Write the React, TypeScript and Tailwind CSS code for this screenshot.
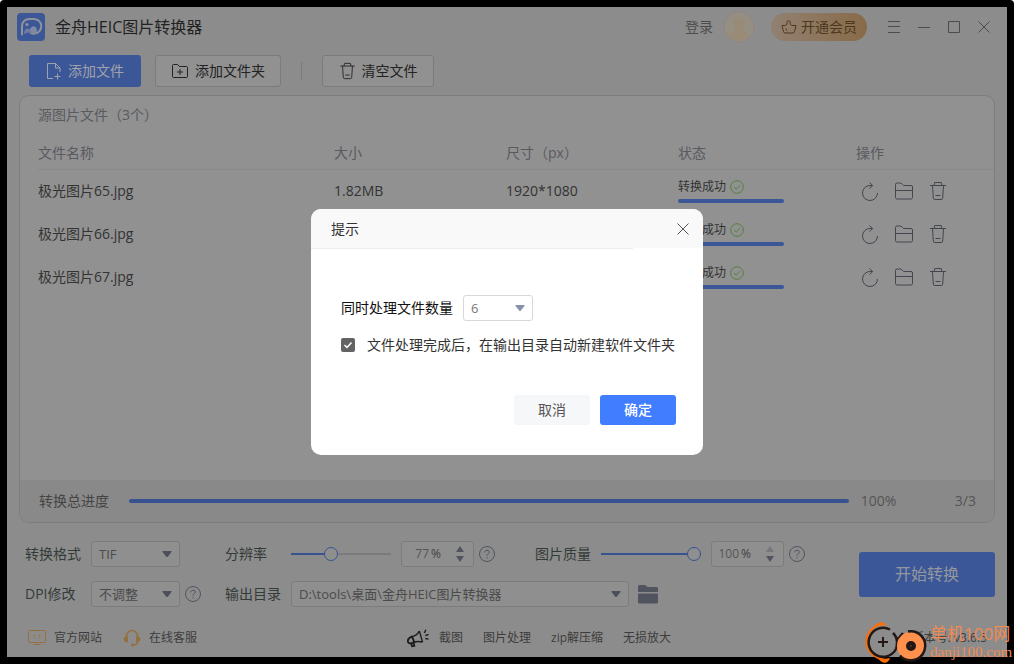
import { useState } from "react";
import type { CSSProperties, ReactNode } from "react";

const files = [
  { name: "极光图片65.jpg", size: "1.82MB", px: "1920*1080" },
  { name: "极光图片66.jpg", size: "", px: "" },
  { name: "极光图片67.jpg", size: "", px: "" },
];

const tools = ["截图", "图片处理", "zip解压缩", "无损放大"];

const Logo = () => (
  <svg viewBox="0 0 28 28" className="size-7">
    <rect width="28" height="28" rx="4" fill="#3c5798" />
    <path
      d="M5 21.500V13a7 7 0 0 1 7-7h4.500a7.300 7.300 0 0 1 1 14.600q-2 .2-3.500-.6"
      fill="none"
      stroke="#8f9299"
      strokeWidth="2"
      strokeLinecap="round"
    />
    <circle cx="10" cy="11.500" r="1.600" fill="#8f9299" />
    <path d="M7 21c0-3.500 1.500-5.500 3.500-5.500 2 0 2.500 2 4.500 4.500-3-.5-5.500-.5-8 1z" fill="#6f7ca0" />
    <path d="M12.500 17c1.500-3.500 4.500-5 6.500-2.500 1 1.500 1 3.500.5 5.500-3 1-5 0-7-3z" fill="#7f89a3" />
  </svg>
);

const FileAddIcon = () => (
  <svg viewBox="0 0 16 18" className="h-[18px] w-4" fill="none" stroke="currentColor">
    <path d="M7 16.500H1.500V1.500h8l4.500 4.500v4M9.500 1.500v4.500H14M11.500 11.500v6M8.500 14.500h6" />
  </svg>
);

const FolderAddIcon = () => (
  <svg viewBox="0 0 18 16" className="h-4 w-[18px]" fill="none" stroke="currentColor">
    <path d="M1.500 2.500q0-1 1-1h4l2 2h7q1 0 1 1v9q0 1-1 1h-13q-1 0-1-1zM9 6v6M6 9h6" />
  </svg>
);

const TrashIcon = ({ className }: { className: string }) => (
  <svg viewBox="0 0 18 20" className={className} fill="none" stroke="currentColor">
    <path d="M1 4.500h16M5 4.500l.8-3h6.400l.8 3M3.500 4.500l.8 12.500q.2 1.500 1.500 1.500h6.400q1.300 0 1.500-1.500l.8-12.500M6.500 14.500h5" />
  </svg>
);

const RetryIcon = () => (
  <svg viewBox="0 0 18 20" className="h-5 w-[18px]" fill="none" stroke="currentColor">
    <path d="M11.500 4.500H9a7.500 7.500 0 1 0 7.500 7.500M8.500 1.500l3.200 3-3.200 3.200" />
  </svg>
);

const FolderIcon = () => (
  <svg viewBox="0 0 20 20" className="size-5" fill="none" stroke="currentColor">
    <path d="M1.500 3.500q0-1.500 1.500-1.500h4l2.500 2.500h7.500q1.500 0 1.500 1.500v10.500q0 1.500-1.500 1.500h-14q-1.500 0-1.500-1.500zM1.500 9.500h17" />
  </svg>
);

const CheckCircle = () => (
  <svg viewBox="0 0 14 14" className="size-3.5" fill="none" stroke="#54813f">
    <circle cx="7" cy="7" r="6.300" />
    <path d="M4 7l2.200 2L10 5.300" />
  </svg>
);

const CloseIcon = () => (
  <svg viewBox="0 0 12 12" className="size-3" fill="none" stroke="currentColor">
    <path d="M.5.5l11 11M11.500.5l-11 11" />
  </svg>
);

const HelpButton = ({ label }: { label: string }) => (
  <button aria-label={label} className="ml-[5px] text-[#50555f]">
    <svg viewBox="0 0 16 16" className="size-4" fill="none" stroke="currentColor">
      <circle cx="8" cy="8" r="7.500" />
      <path d="M5.800 6.400c0-3 4.600-2.800 4.500-.2C10.200 7.800 8 7.800 8 9.800M8 11v1.300" />
    </svg>
  </button>
);

type SelectProps = { id: string; value: string; className: string; light?: boolean };

const Select = ({ id, value, className, light }: SelectProps) => (
  <div className={`relative ml-2.5 ${className}`}>
    <select
      id={id}
      defaultValue={value}
      className={`block h-[26px] w-full appearance-none rounded-[3px] border pr-6 pl-[7px] text-[13px] leading-6 ${
        light ? "border-[#d8d8d8] bg-white text-[#777]" : "border-[#7c7c7c] bg-[#8f8f8f] text-[#4b4b4b]"
      }`}
    >
      <option>{value}</option>
    </select>
    <svg
      viewBox="0 0 10 6"
      className={`pointer-events-none absolute top-2.5 right-2 h-1.5 w-2.5 ${light ? "text-[#8592aa]" : "text-[#4a4f59]"}`}
      fill="currentColor"
    >
      <path d="M1 0h8q1 0 .5 1L5.500 6h-1L.5 1Q0 0 1 0z" />
    </svg>
  </div>
);

type AmountProps = { id: string; label: string; value: number; max: number };

const Amount = ({ id, label, value, max }: AmountProps) => {
  const [amount, setAmount] = useState(value);
  const fill = { "--fill": `${(amount / max) * 100}%` } as CSSProperties;
  return (
    <>
      <input
        id={id}
        type="range"
        min={0}
        max={max}
        value={amount}
        onChange={(e) => setAmount(Number(e.target.value))}
        style={fill}
        className="h-3.5 w-[100px] appearance-none bg-transparent [&::-webkit-slider-runnable-track]:h-0.5 [&::-webkit-slider-runnable-track]:bg-[linear-gradient(to_right,#38528f_var(--fill),#7b7b7b_var(--fill))] [&::-webkit-slider-thumb]:-mt-1.5 [&::-webkit-slider-thumb]:size-3.5 [&::-webkit-slider-thumb]:appearance-none [&::-webkit-slider-thumb]:rounded-full [&::-webkit-slider-thumb]:border [&::-webkit-slider-thumb]:border-[#38528f] [&::-webkit-slider-thumb]:bg-[#8f8f8f]"
      />
      <div className="ml-2.5 flex h-[26px] w-[73px] items-center rounded-[3px] border border-[#7c7c7c] bg-[#8f8f8f] text-[#3f3f3f]">
        <input
          aria-label={label}
          value={amount}
          onChange={(e) => setAmount(Number(e.target.value) || 0)}
          className="w-[27px] bg-transparent text-right text-xs text-[#555]"
        />
        <span className="ml-0.5 text-xs">%</span>
        <span className="mr-[9px] ml-auto flex flex-col gap-1">
          <button
            aria-label={`${label}增加`}
            className={amount < max ? "text-[#50545e]" : "text-[#74777c]"}
            onClick={() => setAmount(Math.min(max, amount + 1))}
          >
            <svg viewBox="0 0 8 6" className="h-1.5 w-2" fill="currentColor">
              <path d="M4 0l4 6H0z" />
            </svg>
          </button>
          <button aria-label={`${label}减少`} className="text-[#50545e]" onClick={() => setAmount(Math.max(0, amount - 1))}>
            <svg viewBox="0 0 8 6" className="h-1.5 w-2" fill="currentColor">
              <path d="M4 6L0 0h8z" />
            </svg>
          </button>
        </span>
      </div>
      <HelpButton label={`${label}说明`} />
    </>
  );
};

const TitleBar = () => (
  <header className="flex h-10 items-center pr-[17px] pl-2.5">
    <Logo />
    <h1 className="ml-2.5 text-base text-[#222]">金舟HEIC图片转换器</h1>
    <div className="ml-auto flex items-center text-[#4c4c4c]">
      <a href="#login" className="text-sm">
        登录
      </a>
      <svg viewBox="0 0 32 32" className="ml-2.5 size-8">
        <circle cx="16" cy="16" r="15" fill="#948e83" stroke="#93857f" />
        <path
          d="M16 6c3.500 0 5.500 2.500 5.500 6 0 3-1.300 5-2.500 6.500.5 3 6 2 7 6.500A14 14 0 0 1 6 25c1-4.500 6.500-3.500 7-6.500-1.200-1.500-2.500-3.500-2.500-6.500 0-3.500 2-6 5.500-6z"
          fill="#988c76"
        />
      </svg>
      <button className="ml-4 flex h-7 w-24 items-center justify-center gap-1 rounded-full bg-linear-to-r from-[#918071] to-[#886b48] text-sm text-[#4c381c]">
        <svg viewBox="0 0 16 14" className="h-3.5 w-4" fill="none" stroke="currentColor">
          <path d="M1 5.500h3.500L6 4V2.500Q6 .8 7.500.8T9.200 2.500V4l1.500 1.500H15l-1.500 6q-.3 1.500-1.500 1.500H4q-1.200 0-1.500-1.500zM5 8.500q0 1.800 1.200 2.200" />
        </svg>
        开通会员
      </button>
      <div className="ml-[21px] flex items-center gap-[18px]">
        <button aria-label="菜单">
          <svg viewBox="0 0 12 12" className="size-3" stroke="currentColor">
            <path d="M0 .5h12M0 5.500h12M0 11.500h12" />
          </svg>
        </button>
        <button aria-label="最小化">
          <svg viewBox="0 0 12 12" className="size-3" stroke="currentColor">
            <path d="M0 6.500h12" />
          </svg>
        </button>
        <button aria-label="最大化">
          <svg viewBox="0 0 12 12" className="size-3" fill="none" stroke="currentColor">
            <path d="M.5.5h11v11H.5z" />
          </svg>
        </button>
        <button aria-label="关闭">
          <CloseIcon />
        </button>
      </div>
    </div>
  </header>
);

const ToolButton = ({ children, className }: { children: ReactNode; className: string }) => (
  <button className={`flex h-8 items-center justify-center gap-1.5 rounded-[3px] text-sm ${className}`}>{children}</button>
);

const Toolbar = () => (
  <div className="mt-2 flex items-center pl-[22px]">
    <ToolButton className="w-28 bg-[#3c5798] text-[#a0a3aa]">
      <FileAddIcon />
      添加文件
    </ToolButton>
    <ToolButton className="ml-3.5 w-[126px] border border-[#7b7b7b] bg-[#919191] text-[#222]">
      <FolderAddIcon />
      添加文件夹
    </ToolButton>
    <span className="ml-5 h-[18px] w-px bg-[#7b7b7b]" />
    <ToolButton className="ml-5 w-28 border border-[#7b7b7b] bg-[#919191] text-[#222]">
      <TrashIcon className="h-[18px] w-[17px]" />
      清空文件
    </ToolButton>
  </div>
);

const FilePanel = () => (
  <main className="mx-3 mt-2 flex grow flex-col overflow-hidden rounded-[10px] border border-[#7d7d7d] bg-[#919191]">
    <h2 className="mt-[9px] ml-[18px] text-sm text-[#585a60]">源图片文件（3个）</h2>
    <div className="mt-[7px] ml-[18px]">
      <table className="w-full table-fixed text-sm">
        <thead>
          <tr className="h-[37px] border-b border-[#898989] text-left text-[#585a60] [&>th]:pt-1.5 [&>th]:font-normal">
            <th>文件名称</th>
            <th className="w-[172px]">大小</th>
            <th className="w-[172px]">尺寸（px）</th>
            <th className="w-[178px]">状态</th>
            <th className="w-[138px]">操作</th>
          </tr>
        </thead>
        <tbody>
          {files.map((file) => (
            <tr key={file.name} className="h-[43px] text-[#333]">
              <td>{file.name}</td>
              <td>{file.size}</td>
              <td>{file.px}</td>
              <td>
                <div className="flex items-center gap-1 text-xs">
                  转换成功
                  <CheckCircle />
                </div>
                <div className="mt-1 h-1 w-[106px] rounded-xs bg-[#3c5798]" />
              </td>
              <td>
                <div className="flex gap-[15px] pl-[5px] text-[#43464f]">
                  <button aria-label="重新转换">
                    <RetryIcon />
                  </button>
                  <button aria-label="打开文件夹">
                    <FolderIcon />
                  </button>
                  <button aria-label="删除">
                    <TrashIcon className="h-5 w-[18px]" />
                  </button>
                </div>
              </td>
            </tr>
          ))}
        </tbody>
      </table>
    </div>
    <div className="mt-auto flex h-[42px] items-center bg-[#898989] pr-[18px] pl-[19px] text-sm text-[#444]">
      转换总进度
      <div className="ml-5 h-1 grow rounded-xs bg-[#38528f]" />
      <span className="ml-3 w-[94px] text-[#555]">100%</span>
      <span className="text-[#555]">3/3</span>
    </div>
  </main>
);

const Settings = () => (
  <section className="flex items-center justify-between pt-[18px] pr-3 pl-[18px] text-sm text-[#333b38]">
    <div className="flex flex-col gap-3.5">
      <div className="flex h-[26px] items-center">
        <label htmlFor="format" className="w-14">
          转换格式
        </label>
        <Select id="format" value="TIF" className="w-[89px]" />
        <label htmlFor="resolution" className="ml-[45px] w-[66px]">
          分辨率
        </label>
        <Amount id="resolution" label="分辨率" value={77} max={200} />
        <label htmlFor="quality" className="ml-10 w-[66px]">
          图片质量
        </label>
        <Amount id="quality" label="图片质量" value={100} max={100} />
      </div>
      <div className="flex h-[26px] items-center">
        <label htmlFor="dpi" className="w-14">
          DPI修改
        </label>
        <Select id="dpi" value="不调整" className="w-[89px]" />
        <HelpButton label="DPI说明" />
        <label htmlFor="output" className="ml-6 w-14">
          输出目录
        </label>
        <Select id="output" value="D:\tools\桌面\金舟HEIC图片转换器" className="w-[338px]" />
        <button aria-label="打开输出目录" className="ml-[9px] text-[#50545e]">
          <svg viewBox="0 0 20 20" className="size-5" fill="currentColor">
            <path d="M0 8V2.500Q0 1 1.500 1h5Q8 1 9 2.500l.5.500h9Q20 3 20 4.500V8zM0 9.500h20V18q0 1.500-1.500 1.500h-17Q0 19.500 0 18z" />
          </svg>
        </button>
      </div>
    </div>
    <button className="h-[45px] w-[136px] rounded-[3px] bg-[#3c5798] text-base text-[#94979e]">开始转换</button>
  </section>
);

const StatusBar = () => (
  <footer className="mt-[17px] mb-1.5 flex h-[27px] items-center px-5 text-xs text-[#3c3c3c]">
    <a href="#site" className="flex items-center gap-[7px]">
      <svg viewBox="0 0 20 18" className="h-[18px] w-5" fill="none" stroke="#94703f">
        <rect x="1.500" y="1.500" width="17" height="12" rx="1" />
        <path d="M8.500 5.500l-2 2 2 2M11.500 5.500l2 2-2 2M6.500 15.500h7" />
      </svg>
      官方网站
    </a>
    <a href="#service" className="ml-[21px] flex items-center gap-2">
      <svg viewBox="0 0 18 18" className="size-[18px]" fill="none" stroke="#94703f">
        <path d="M3.500 8V7a5.500 5.500 0 0 1 11 0v1M15 12.500c-.5 2-2.500 3.500-5 3.500" strokeWidth="1.500" />
        <path d="M4.500 7.500v5.500Q1 13 1 10.200t3.500-2.700zM13.500 7.500v5.500q3.500 0 3.500-2.800t-3.500-2.700z" fill="#94703f" />
        <circle cx="9.500" cy="16" r="1.500" fill="#94703f" stroke="none" />
      </svg>
      在线客服
    </a>
    <nav className="ml-[210px] flex items-center gap-5">
      <svg viewBox="0 0 24 20" className="-mr-2.5 h-5 w-[22px]" fill="none" stroke="#1c1c1c" strokeWidth="1.500">
        <path d="M13.500 2.500l3.500 12M5.500 8.500q5-1 8-6M8 14.500q4-1.500 9 0M19 4.500L20.500 1M20 7.500l3.500-1.500M20 10.500l3.500.8" />
        <path d="M5.500 8.500l2.500 6-4 1.500Q.5 16 1 12.500 1.300 10 5.500 8.500zM4.500 16l1 3 2.500-.5-1-4" strokeWidth="2" />
      </svg>
      {tools.map((tool) => (
        <a key={tool} href="#tools">
          {tool}
        </a>
      ))}
    </nav>
    <span className="ml-auto">版本号: v3.6.5</span>
  </footer>
);

const Watermark = () => (
  <div className="pointer-events-none absolute right-0 bottom-0 flex h-11 w-[150px] items-center text-[#f28a52]">
    <svg viewBox="0 0 66 44" className="h-11 w-[66px] shrink-0" fill="none">
      <path d="M14 5C-2 12-3 34 20 40" stroke="#ff6d05" strokeWidth="2" />
      <path d="M11 7Q14 1 19 2.500q2 1 4 3-5-1-12 1.500zM13 37q6 3 13 1-2 6-7 4.500-3-1-6-5.500z" fill="#ff6d05" />
      <path d="M26 9.500A14.500 14.500 0 1 0 32 29" stroke="#231815" strokeWidth="2.500" />
      <path d="M29 13q4 4 4 9t-1 7M39 13l-5 6" stroke="#231815" strokeWidth="2.500" />
      <path d="M19 17v10M14 22h10" stroke="#231815" strokeWidth="2" />
      <circle cx="47" cy="26" r="14" fill="#ff914d" />
      <path d="M44 11.500a14.500 14.500 0 1 1-8 24" stroke="#231815" strokeWidth="2.500" />
      <circle cx="47" cy="26" r="5" fill="#231815" />
      <circle cx="47" cy="26" r="1" fill="#5a3a28" />
    </svg>
    <div>
      <p className="text-[17px] leading-5">单机100网</p>
      <p className="font-['Liberation_Serif','Noto_Sans_CJK_SC',serif] text-[15px] leading-4">danji100.com</p>
    </div>
  </div>
);

const TipDialog = () => (
  <div className="fixed inset-0 z-10 flex items-center justify-center">
    <div
      role="dialog"
      aria-modal="true"
      aria-labelledby="tip-title"
      className="w-[392px] overflow-hidden rounded-[10px] bg-white text-sm text-[#333]"
    >
      <div className="flex h-[39px] items-center justify-between bg-[#f9f9f9] pr-3.5 pl-5">
        <h2 id="tip-title">提示</h2>
        <button aria-label="关闭提示" className="text-[#555]">
          <CloseIcon />
        </button>
      </div>
      <div className="h-px w-[322px] bg-[#ececec]" />
      <div className="px-[30px] pt-[46px] pb-[30px]">
        <div className="flex items-center">
          <label htmlFor="count" className="text-[#111]">
            同时处理文件数量
          </label>
          <Select id="count" value="6" className="w-[70px]" light />
        </div>
        <label className="mt-3.5 flex h-5 items-center gap-3 whitespace-nowrap">
          <input
            type="checkbox"
            defaultChecked
            className="size-3.5 shrink-0 appearance-none rounded-xs bg-[#636363] bg-[url('data:image/svg+xml,%3Csvg%20xmlns=%22http://www.w3.org/2000/svg%22%20viewBox=%220%200%2014%2014%22%20fill=%22none%22%20stroke=%22white%22%20stroke-width=%221.5%22%3E%3Cpath%20d=%22M3.5%207l2.5%202.500%204.500-5%22/%3E%3C/svg%3E')]"
          />
          文件处理完成后，在输出目录自动新建软件文件夹
        </label>
        <div className="-mr-[3px] mt-10 flex justify-end gap-2.5">
          <button className="h-[30px] w-[76px] rounded-[3px] bg-[#f6f7f9] text-[#555]">取消</button>
          <button className="h-[30px] w-[76px] rounded-[3px] bg-[#417dff] font-medium text-white">确定</button>
        </div>
      </div>
    </div>
  </div>
);

export default function App() {
  return (
    <div className="relative flex min-h-screen flex-col rounded-t-[4px] bg-black p-[7px] font-['Open_Sans','Noto_Sans_CJK_SC',sans-serif]">
      <div className="flex grow flex-col bg-[#8c8c8c]">
        <TitleBar />
        <Toolbar />
        <FilePanel />
        <Settings />
        <StatusBar />
      </div>
      <Watermark />
      <TipDialog />
    </div>
  );
}
